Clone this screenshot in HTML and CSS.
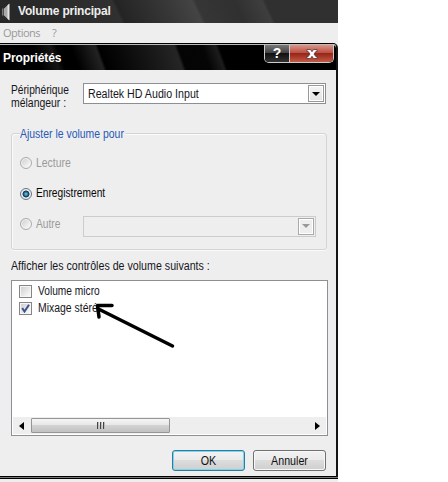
FILE: index.html
```
<!DOCTYPE html>
<html lang="fr">
<head>
<meta charset="utf-8">
<title>Volume principal</title>
<link rel="stylesheet" href="styles.css">
</head>
<body>
<main class="app">
  <header class="titlebar">
    <svg class="speaker" width="12" height="20" viewBox="0 0 12 20">
      <path d="M2 6.500h1.500v7H2z" fill="#777"/>
      <path d="M4 6.500 9 2v16l-5-4.500z" fill="#a8a8a8"/>
      <path d="M7.500 3.300 9.500 1.500v17l-2-1.800z" fill="#e4e4e4"/>
    </svg>
    <span class="app-title">Volume principal</span>
  </header>
  <nav class="menu"><span class="menu-options">Options</span><span>?</span></nav>
  <section class="dialog">
    <header class="dialog-title">
      <span class="dialog-name">Propriétés</span>
      <div class="controls">
        <span class="help">?</span>
        <span class="close"><svg width="12" height="10" viewBox="0 0 12 10"><path d="M1 .5h3.500L6 2.700 7.500.5H11v2H9.800L8 5l1.800 2.500H11v2H7.500L6 7.300 4.500 9.500H1v-2h1.200L4 5 2.200 2.500H1z" fill="#fff" stroke="#533" stroke-width=".8"/></svg></span>
      </div>
    </header>
    <div class="content">
      <div class="mixer">
        <label class="mixer-label"><span class="narrow tight">Périphérique</span><span class="narrow">mélangeur :</span></label>
        <div class="combo"><span class="narrow wide">Realtek HD Audio Input</span><i class="drop"><svg width="8" height="4" viewBox="0 0 8 4"><path d="M0 0h8L4 4z"/></svg></i></div>
      </div>
      <div class="group">
        <div class="legend"><span class="narrow">Ajuster le volume pour</span></div>
        <div class="option off"><i class="radio"></i><span class="narrow">Lecture</span></div>
        <div class="option"><i class="radio on"></i><span class="narrow tight">Enregistrement</span></div>
        <div class="option off"><i class="radio"></i><span class="narrow tight">Autre</span>
          <div class="combo combo-off"><i class="drop"><svg width="8" height="4" viewBox="0 0 8 4"><path d="M0 0h8L4 4z"/></svg></i></div>
        </div>
      </div>
      <p class="list-label"><span class="narrow wide">Afficher les contrôles de volume suivants :</span></p>
      <div class="list">
        <div class="item"><i class="check"></i><span class="narrow tight">Volume micro</span></div>
        <div class="item"><i class="check"><svg width="9" height="9" viewBox="0 0 9 9"><path d="M1.200 4 3.500 7.500 8 .8" fill="none" stroke="#3c528c" stroke-width="2"/></svg></i><span class="narrow">Mixage stéré</span></div>
        <div class="scroll">
          <svg class="arr" width="5" height="8" viewBox="0 0 5 8"><path d="M5 0v8L0 4z"/></svg>
          <div class="thumb"><i></i><i></i><i></i></div>
          <svg class="arr" width="5" height="8" viewBox="0 0 5 8"><path d="M0 0v8l5-4z"/></svg>
        </div>
        <svg class="pointer" width="84" height="48" viewBox="92 302 84 48"><path d="M172.500 346 97.500 308.500M112 305.500H97.500L99 317" fill="none" stroke="#000" stroke-width="3.500" stroke-linecap="round" stroke-linejoin="round"/></svg>
      </div>
      <footer class="actions"><button class="ok"><span>OK</span></button><button><span>Annuler</span></button></footer>
    </div>
  </section>
</main>
</body>
</html>
```
FILE: styles.css
```
* { box-sizing: border-box; }
body { margin: 0; background: #fff; color: #16161c; font: 12px/13px "Liberation Sans", Arial, sans-serif; overflow: hidden; }
span { white-space: nowrap; }
i { display: block; flex: none; }
.narrow { display: block; width: max-content; transform: scaleX(.87); transform-origin: left; }
.tight { transform: scaleX(.85); }
.wide { transform: scaleX(.888); }
.app { width: 338px; height: 482px; background: #eee; }
.titlebar { height: 23px; display: flex; align-items: center; background: linear-gradient(65deg, #282828 10%, #303030 35%, #242424 36%, #373737 50%, #444 58%, #363636 59%, #303030 70%, #3e3e3e 78%, #303030 79%); color: #eee; font-weight: bold; }
.speaker { margin-right: 6px; }
.app-title { letter-spacing: -.2px; }
.menu { height: 20px; padding: 3px 3px 0; display: flex; gap: 12px; font-family: "Open Sans", sans-serif; font-size: 11px; color: #999; }
.menu-options { width: 37px; letter-spacing: -.5px; }
.dialog { width: 338px; height: 436px; border: solid #000; border-width: 1px 2px 3px 0; border-radius: 0 5px 0 0; border-right-color: #151515; background: #eee; position: relative; }
.dialog::after { content: ""; position: absolute; left: 0; right: -2px; bottom: -2px; height: 1px; background: #777; }
.dialog-title { height: 26px; padding: 0 2px 0 3px; display: flex; justify-content: space-between; border-top: 1px solid #bbb; border-radius: 0 4px 0 0; background: linear-gradient(70deg, #000 12%, #151515 17%, #000 19%, #000 23%, #222 30%, #000 31%, #090909 37%, #252525 53%, #040404 54%, #050505 61%, #1c1c1c 65%, #000 66%); color: #fff; font-weight: bold; }
.dialog-name { padding-top: 7px; letter-spacing: -.1px; }
.controls { width: 70px; height: 18px; display: flex; border: 1px solid #ccc; border-top: 0; border-radius: 0 0 5px 5px; overflow: hidden; }
.help, .close { display: flex; align-items: center; justify-content: center; }
.help { width: 25px; border-right: 1px solid #ccc; background: linear-gradient(#777, #444 45%, #111 50%, #333); font-size: 14px; }
.close { flex: 1; background: linear-gradient(#d99488, #bd5144 45%, #96251a 50%, #c45a43); }
.content { padding: 13px 8px 0 11px; }
.mixer { display: flex; height: 50px; }
.mixer-label { width: 72px; padding-top: 1px; }
.combo { width: 243px; height: 21px; padding: 1px 1px 1px 4px; border: 1px solid #8e8f94; background: #fff; display: flex; align-items: center; justify-content: space-between; }
.combo .narrow { margin-top: 2px; }
.drop { width: 16px; height: 17px; border: 1px solid #999; box-shadow: inset 0 0 0 1px #fff; background: linear-gradient(#f4f4f4, #e4e4e4); display: flex; align-items: center; justify-content: center; }
.group { width: 316px; height: 117px; border: 1px solid #d4d4d4; border-radius: 3px; box-shadow: inset 1px 1px #fafafa, 0 1px #fafafa; padding-left: 8px; }
.legend { height: 14px; margin-top: -7px; color: #2859b5; }
.legend .narrow { background: #eee; padding-right: 2px; line-height: 15px; }
.option { height: 30.500px; display: flex; align-items: center; color: #080808; }
.legend + .option { margin-top: 7px; }
.off { color: #9a9a9a; }
.radio { width: 12px; height: 12px; margin-right: 4px; border: 1px solid #8c8c8c; border-radius: 50%; background: linear-gradient(135deg, #ccc, #fff); box-shadow: inset 0 0 0 1px #f4f4f4; }
.off .radio { border-color: #aaa; }
.on { background: radial-gradient(circle at 50% 50%, #8bd2ea 0, #28769b 25%, #10304c 44%, #e9edf0 54%); border-color: #667681; box-shadow: none; }
.combo-off { width: 233px; margin-left: auto; margin-right: 10px; margin-top: 4px; border-color: #ccc; background: #eee; justify-content: flex-end; }
.combo-off .drop { border-color: #aaa; background: #eee; }
.combo-off path { fill: #999; }
.list-label { margin: 10px 0 7px; height: 13px; }
.list { width: 317px; height: 156px; padding: 2px 1px 1px; border: 1px solid #8e8f94; background: #fff; position: relative; }
.item { height: 17px; display: flex; align-items: center; padding-left: 6px; }
.check { width: 13px; height: 13px; margin-right: 6px; border: 1px solid #858585; padding: 1px; background: linear-gradient(135deg, #ccc, #fff); box-shadow: inset 0 0 0 1px #f6f6f6; }
.check svg { display: block; }
.scroll { height: 17px; margin-top: 100px; padding: 0 6px; display: flex; align-items: center; background: #eee; }
.thumb { width: 139px; height: 15px; margin: 0 auto 0 7px; border: 1px solid #969696; border-radius: 1px; background: linear-gradient(#f5f5f5, #e7e7e7 45%, #d2d2d2 50%, #c1c1c1); display: flex; align-items: center; justify-content: center; gap: 1px; }
.thumb i { width: 2px; height: 7px; background: linear-gradient(90deg, #444 50%, #bbb 50%); }
.pointer { position: absolute; left: 80px; top: 21px; }
.actions { display: flex; justify-content: flex-end; gap: 8px; margin-top: 14px; padding-right: 2px; }
button { width: 73px; height: 21px; padding: 2px 0 0; border: 1px solid #707070; border-radius: 3px; box-shadow: inset 0 0 0 1px #f8f8f8; background: linear-gradient(#f2f2f2, #eaeaea 48%, #dcdcdc 50%, #cfcfcf); font: inherit; color: #111; }
button span { display: block; transform: scaleX(.89); }
.ok { border-color: #2c7c9e; box-shadow: inset 0 0 0 1px #7fd3ef; }
```
